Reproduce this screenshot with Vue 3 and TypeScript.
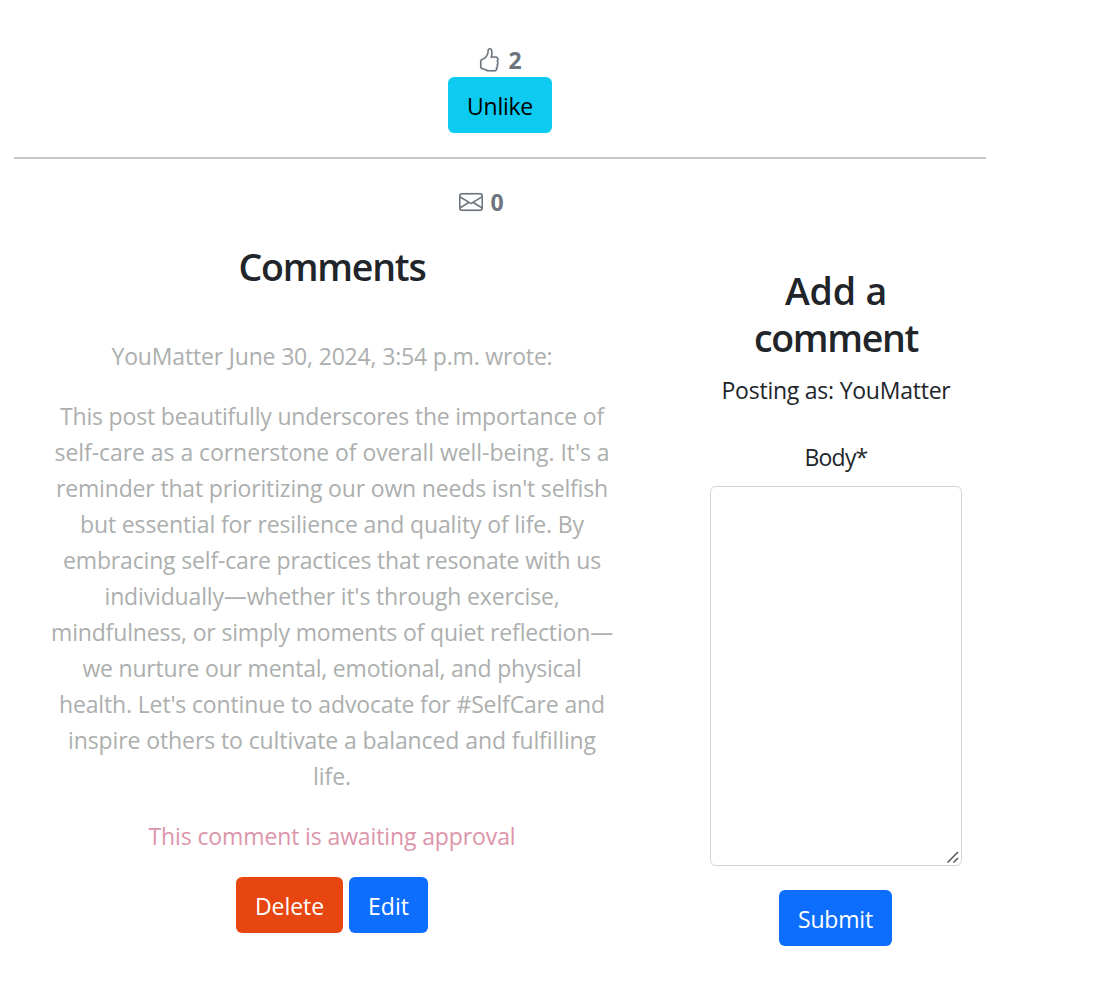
<script setup lang="ts">
import { ref } from 'vue'

interface Line {
  text: string
  width: number
}

const likes = ref(2)
const comments = ref(0)
const body = ref('')

const meta: Line = { text: 'YouMatter June 30, 2024, 3:54 p.m. wrote:', width: 441 }
const commentLines: Line[] = [
  { text: 'This post beautifully underscores the importance of', width: 544 },
  { text: "self-care as a cornerstone of overall well-being. It's a", width: 555 },
  { text: "reminder that prioritizing our own needs isn't selfish", width: 552 },
  { text: 'but essential for resilience and quality of life. By', width: 504 },
  { text: 'embracing self-care practices that resonate with us', width: 538 },
  { text: "individually—whether it's through exercise,", width: 455 },
  { text: 'mindfulness, or simply moments of quiet reflection—', width: 562 },
  { text: 'we nurture our mental, emotional, and physical', width: 499 },
  { text: "health. Let's continue to advocate for #SelfCare and", width: 546 },
  { text: 'inspire others to cultivate a balanced and fulfilling', width: 528 },
  { text: 'life.', width: 38 },
]

// Tracks a line of text so that it spans the given measure.
const vFit = {
  mounted(el: HTMLElement, binding: { value: number }) {
    const count = (el.textContent ?? '').length
    const gap = (binding.value - el.getBoundingClientRect().width) / count
    el.style.letterSpacing = `${gap.toFixed(4)}px`
  },
}
</script>

<template>
  <main class="page">
    <section class="likes">
      <div class="counter thumbs">
        <svg class="icon" viewBox="0 0 16 16" fill="currentColor" aria-hidden="true">
          <path d="M8.864.046C7.908-.193 7.02.53 6.956 1.466c-.072 1.051-.23 2.016-.428 2.59-.125.36-.479 1.013-1.04 1.639-.557.623-1.282 1.178-2.131 1.41C2.685 7.288 2 7.87 2 8.72v4.001c0 .845.682 1.464 1.448 1.545 1.07.114 1.564.415 2.068.723l.048.03c.272.165.578.348.97.484.397.136.861.217 1.466.217h3.5c.937 0 1.599-.477 1.934-1.064a1.86 1.86 0 0 0 .254-.912c0-.152-.023-.312-.077-.464.201-.263.38-.578.488-.901.11-.33.172-.762.004-1.149.069-.13.12-.269.159-.403.077-.27.113-.568.113-.857 0-.288-.036-.585-.113-.856a2.144 2.144 0 0 0-.138-.362 1.9 1.9 0 0 0 .234-1.734c-.206-.592-.682-1.1-1.2-1.272-.847-.282-1.803-.276-2.516-.211a9.84 9.84 0 0 0-.443.05 9.365 9.365 0 0 0-.062-4.509A1.38 1.38 0 0 0 9.125.111L8.864.046zM11.5 14.721H8c-.51 0-.863-.069-1.14-.164-.281-.097-.506-.228-.776-.393l-.04-.024c-.555-.339-1.198-.731-2.49-.868-.333-.036-.554-.29-.554-.55V8.72c0-.254.226-.543.62-.65 1.095-.3 1.977-.996 2.614-1.708.635-.71 1.064-1.475 1.238-1.978.243-.7.407-1.768.482-2.85.025-.362.36-.594.667-.518l.262.066c.16.04.258.143.288.255a8.34 8.34 0 0 1-.145 4.725.5.5 0 0 0 .595.644l.003-.001.014-.003.058-.014a8.908 8.908 0 0 1 1.036-.157c.663-.06 1.457-.054 2.11.164.175.058.45.3.57.65.107.308.087.67-.266 1.022l-.353.353.353.354c.043.043.105.141.154.315.048.167.075.37.075.581 0 .212-.027.414-.075.582-.05.174-.111.272-.154.315l-.353.353.353.354c.047.047.109.177.005.488a2.224 2.224 0 0 1-.505.805l-.353.353.353.354c.006.005.041.05.041.17a.866.866 0 0 1-.121.416c-.165.288-.503.56-1.066.56z" />
        </svg>
        <strong>{{ likes }}</strong>
      </div>
      <button class="btn info" type="button"><span v-fit="66">Unlike</span></button>
    </section>

    <hr class="rule" />

    <div class="counter mail">
      <svg class="icon" viewBox="0 0 16 16" fill="currentColor" aria-hidden="true">
        <path d="M0 4a2 2 0 0 1 2-2h12a2 2 0 0 1 2 2v8a2 2 0 0 1-2 2H2a2 2 0 0 1-2-2V4Zm2-1a1 1 0 0 0-1 1v.217l7 4.2 7-4.2V4a1 1 0 0 0-1-1H2Zm13 2.383-4.708 2.825L15 11.105V5.383Zm-.034 6.876-5.64-3.471L8 9.583l-1.326-.795-5.64 3.47A1 1 0 0 0 2 13h12a1 1 0 0 0 .966-.741ZM1 11.105l4.708-2.897L1 5.383v5.722Z" />
      </svg>
      <strong>{{ comments }}</strong>
    </div>

    <div class="columns">
      <section class="thread">
        <h3><span v-fit="187">Comments</span></h3>
        <article class="comment">
          <p class="faded"><span v-fit="meta.width">{{ meta.text }}</span></p>
          <p class="faded">
            <span v-for="line in commentLines" :key="line.text" class="line">
              <span v-fit="line.width">{{ line.text }}</span>
            </span>
          </p>
          <p class="pending"><span v-fit="367">This comment is awaiting approval</span></p>
          <div class="actions">
            <button class="btn danger" type="button"><span v-fit="69">Delete</span></button>
            <button class="btn primary edit" type="button"><span v-fit="41">Edit</span></button>
          </div>
        </article>
      </section>

      <form class="add" @submit.prevent>
        <h3>
          <span class="line"><span v-fit="102">Add a</span></span>
          <span class="line"><span v-fit="164">comment</span></span>
        </h3>
        <p class="author"><span v-fit="229">Posting as: YouMatter</span></p>
        <label for="body"><span v-fit="63">Body*</span></label>
        <div class="field">
          <textarea id="body" v-model="body"></textarea>
          <svg class="grip" viewBox="0 0 14 14" aria-hidden="true">
            <path d="M1.5 12.5 12 2M7.5 12.5 12 8" fill="none" stroke="#555" stroke-width="1.5" />
          </svg>
        </div>
        <button class="btn primary submit" type="submit"><span v-fit="75">Submit</span></button>
      </form>
    </div>
  </main>
</template>

<style>
body {
  margin: 0;
  background: #fff;
}
</style>

<style scoped>
.page {
  box-sizing: border-box;
  width: 986px;
  height: 1006px;
  padding: 42px 0 0 14px;
  overflow: hidden;
  color: #212529;
  font-family: 'Open Sans', 'Noto Sans', sans-serif;
  font-size: 23px;
  line-height: 36px;
  text-align: center;
}

p,
h3 {
  margin: 0;
}

h3 {
  font-size: 37.5px;
  font-weight: 600;
  line-height: 46.5px;
}

span {
  white-space: nowrap;
}

.line {
  display: block;
}

.likes {
  display: flex;
  flex-direction: column;
  align-items: center;
}

.counter {
  display: flex;
  align-items: center;
  justify-content: center;
  gap: 7px;
  height: 35px;
  color: #6c757d;
}

.counter strong {
  font-size: 23px;
  font-weight: 700;
}

.thumbs {
  margin-right: 1px;
}

.icon {
  width: 24px;
  height: 24px;
  stroke: currentColor;
  stroke-width: 0.1;
}

.btn {
  box-sizing: border-box;
  height: 56px;
  padding: 2px 0 0;
  border: 0;
  border-radius: 6px;
  color: #fff;
  font: inherit;
  text-align: center;
}

.info {
  width: 104px;
  background: #0dcaf0;
  color: #000;
}

.danger {
  width: 107px;
  background: #e84610;
}

.primary {
  background: #0d6efd;
}

.edit {
  width: 79px;
}

.submit {
  width: 113px;
  margin: 24px 1px 0 0;
}

.rule {
  height: 2px;
  margin: 24px 0 0;
  border: 0;
  background: #c7c8c9;
}

.mail {
  width: 935px;
  margin-top: 25px;
}

.columns {
  display: flex;
  align-items: flex-start;
  justify-content: space-between;
  padding: 1px 24px 0 0;
}

.thread {
  width: 636px;
  padding-top: 24px;
}

.comment {
  display: flex;
  flex-direction: column;
  gap: 24px;
  padding-top: 47.5px;
}

.faded {
  color: #acafae;
}

.pending {
  color: #dc95a9;
}

.actions {
  display: flex;
  justify-content: center;
  gap: 6px;
  margin-top: -1px;
}

.add {
  display: flex;
  flex-direction: column;
  align-items: center;
  width: 252px;
  padding-top: 48px;
}

.author {
  margin-top: 11px;
}

label {
  margin-top: 31px;
}

.field {
  position: relative;
  height: 380px;
  margin-top: 11px;
}

textarea {
  display: block;
  box-sizing: border-box;
  width: 252px;
  height: 380px;
  margin: 0;
  border: 1px solid #ced4da;
  border-radius: 6px;
  background: #fff;
  font: inherit;
  resize: none;
}

.grip {
  position: absolute;
  right: 2px;
  bottom: 2px;
  width: 14px;
  height: 14px;
  pointer-events: none;
}
</style>
